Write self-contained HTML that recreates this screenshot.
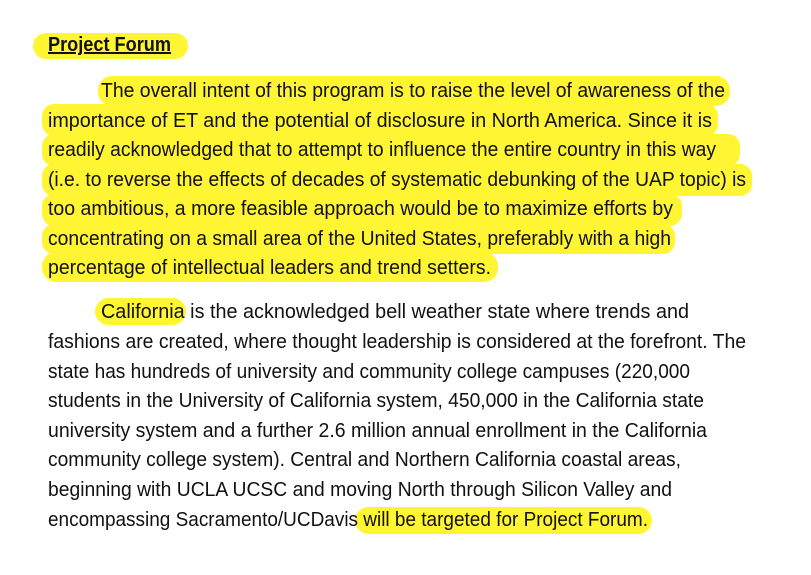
<!DOCTYPE html>
<html><head><meta charset="utf-8"><style>
body{margin:0;width:811px;height:575px;background:#fff;position:relative;overflow:hidden;font-family:"Liberation Sans",sans-serif;color:#111}
.h{position:absolute;background:#fff533;border-radius:14px}
.l{position:absolute;white-space:nowrap;font-size:20px;line-height:22px;transform-origin:0 50%}
</style></head><body>
<div class="h" style="left:33px;top:33px;width:155px;height:26px"></div>
<div class="h" style="left:98px;top:76px;width:632px;height:30px"></div>
<div class="h" style="left:42px;top:104px;width:676px;height:32px;border-radius:12px"></div>
<div class="h" style="left:42px;top:134px;width:698px;height:32px;border-radius:12px"></div>
<div class="h" style="left:42px;top:164px;width:710px;height:32px;border-radius:12px"></div>
<div class="h" style="left:42px;top:194px;width:640px;height:32px;border-radius:12px"></div>
<div class="h" style="left:42px;top:224px;width:633px;height:30px;border-radius:12px"></div>
<div class="h" style="left:42px;top:252px;width:456px;height:30px"></div>
<div class="h" style="left:95px;top:298px;width:91px;height:27px"></div>
<div class="h" style="left:355px;top:507px;width:297px;height:27px"></div>

<div class="l" data-w="123" style="left:48px;top:34px;font-weight:bold;text-decoration:underline">Project Forum</div>
<div class="l" data-w="624" style="left:101px;top:80px">The overall intent of this program is to raise the level of awareness of the</div>
<div class="l" data-w="664" style="left:48px;top:110px">importance of ET and the potential of disclosure in North America. Since it is</div>
<div class="l" data-w="668" style="left:48px;top:139px">readily acknowledged that to attempt to influence the entire country in this way</div>
<div class="l" data-w="698" style="left:48px;top:169px">(i.e. to reverse the effects of decades of systematic debunking of the UAP topic) is</div>
<div class="l" data-w="625" style="left:48px;top:198px">too ambitious, a more feasible approach would be to maximize efforts by</div>
<div class="l" data-w="623" style="left:48px;top:228px">concentrating on a small area of the United States, preferably with a high</div>
<div class="l" data-w="443" style="left:48px;top:257px">percentage of intellectual leaders and trend setters.</div>

<div class="l" data-w="588" style="left:101px;top:301px">California is the acknowledged bell weather state where trends and</div>
<div class="l" data-w="698" style="left:48px;top:331px">fashions are created, where thought leadership is considered at the forefront. The</div>
<div class="l" data-w="642" style="left:48px;top:361px">state has hundreds of university and community college campuses (220,000</div>
<div class="l" data-w="656" style="left:48px;top:390px">students in the University of California system, 450,000 in the California state</div>
<div class="l" data-w="659" style="left:48px;top:420px">university system and a further 2.6 million annual enrollment in the California</div>
<div class="l" data-w="633" style="left:48px;top:449px">community college system). Central and Northern California coastal areas,</div>
<div class="l" data-w="624" style="left:48px;top:479px">beginning with UCLA UCSC and moving North through Silicon Valley and</div>
<div class="l" data-w="600" style="left:48px;top:509px">encompassing Sacramento/UCDavis will be targeted for Project Forum.</div>
<script>
document.querySelectorAll('.l').forEach(function(e){var w=e.getBoundingClientRect().width;e.style.transform='scaleX('+(e.dataset.w/w)+')';});
</script>
</body></html>
